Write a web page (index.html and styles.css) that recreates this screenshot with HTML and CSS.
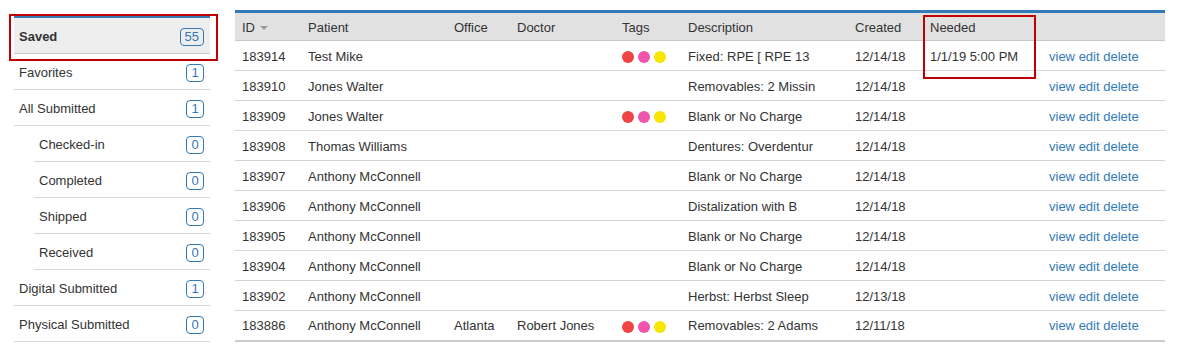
FILE: index.html
```html
<!DOCTYPE html>
<html>
<head>
  <meta charset="UTF-8">
  <title>Cases</title>
  <link rel="stylesheet" href="styles.css">
</head>
<body>
  <div class="page">
    <!-- Case folders -->
    <ul class="folders">
      <li class="folder active"><span>Saved</span><span class="badge">55</span></li>
      <li class="folder"><span>Favorites</span><span class="badge">1</span></li>
      <li class="folder"><span>All Submitted</span><span class="badge">1</span></li>
      <li class="folder sub"><span>Checked-in</span><span class="badge">0</span></li>
      <li class="folder sub"><span>Completed</span><span class="badge">0</span></li>
      <li class="folder sub"><span>Shipped</span><span class="badge">0</span></li>
      <li class="folder sub"><span>Received</span><span class="badge">0</span></li>
      <li class="folder"><span>Digital Submitted</span><span class="badge">1</span></li>
      <li class="folder"><span>Physical Submitted</span><span class="badge">0</span></li>
    </ul>

    <!-- Cases table -->
    <table class="cases">
      <colgroup>
        <col style="width:66px"><col style="width:146px"><col style="width:63px"><col style="width:105px">
        <col style="width:66px"><col style="width:167px"><col style="width:75px"><col style="width:119px"><col>
      </colgroup>
      <thead>
        <tr>
          <th>ID <span class="caret"></span></th>
          <th>Patient</th>
          <th>Office</th>
          <th>Doctor</th>
          <th>Tags</th>
          <th>Description</th>
          <th>Created</th>
          <th>Needed</th>
          <th></th>
        </tr>
      </thead>
      <tbody>
        <tr>
          <td>183914</td><td>Test Mike</td><td></td><td></td>
          <td><span class="dot red"></span><span class="dot pink"></span><span class="dot yellow"></span></td>
          <td>Fixed: RPE [ RPE 13</td><td>12/14/18</td><td>1/1/19 5:00 PM</td>
          <td class="actions"><a href="#">view</a> <a href="#">edit</a> <a href="#">delete</a></td>
        </tr>
        <tr>
          <td>183910</td><td>Jones Walter</td><td></td><td></td><td></td>
          <td>Removables: 2 Missin</td><td>12/14/18</td><td></td>
          <td class="actions"><a href="#">view</a> <a href="#">edit</a> <a href="#">delete</a></td>
        </tr>
        <tr>
          <td>183909</td><td>Jones Walter</td><td></td><td></td>
          <td><span class="dot red"></span><span class="dot pink"></span><span class="dot yellow"></span></td>
          <td>Blank or No Charge</td><td>12/14/18</td><td></td>
          <td class="actions"><a href="#">view</a> <a href="#">edit</a> <a href="#">delete</a></td>
        </tr>
        <tr>
          <td>183908</td><td>Thomas Williams</td><td></td><td></td><td></td>
          <td>Dentures: Overdentur</td><td>12/14/18</td><td></td>
          <td class="actions"><a href="#">view</a> <a href="#">edit</a> <a href="#">delete</a></td>
        </tr>
        <tr>
          <td>183907</td><td>Anthony McConnell</td><td></td><td></td><td></td>
          <td>Blank or No Charge</td><td>12/14/18</td><td></td>
          <td class="actions"><a href="#">view</a> <a href="#">edit</a> <a href="#">delete</a></td>
        </tr>
        <tr>
          <td>183906</td><td>Anthony McConnell</td><td></td><td></td><td></td>
          <td>Distalization with B</td><td>12/14/18</td><td></td>
          <td class="actions"><a href="#">view</a> <a href="#">edit</a> <a href="#">delete</a></td>
        </tr>
        <tr>
          <td>183905</td><td>Anthony McConnell</td><td></td><td></td><td></td>
          <td>Blank or No Charge</td><td>12/14/18</td><td></td>
          <td class="actions"><a href="#">view</a> <a href="#">edit</a> <a href="#">delete</a></td>
        </tr>
        <tr>
          <td>183904</td><td>Anthony McConnell</td><td></td><td></td><td></td>
          <td>Blank or No Charge</td><td>12/14/18</td><td></td>
          <td class="actions"><a href="#">view</a> <a href="#">edit</a> <a href="#">delete</a></td>
        </tr>
        <tr>
          <td>183902</td><td>Anthony McConnell</td><td></td><td></td><td></td>
          <td>Herbst: Herbst Sleep</td><td>12/13/18</td><td></td>
          <td class="actions"><a href="#">view</a> <a href="#">edit</a> <a href="#">delete</a></td>
        </tr>
        <tr>
          <td>183886</td><td>Anthony McConnell</td><td>Atlanta</td><td>Robert Jones</td>
          <td><span class="dot red"></span><span class="dot pink"></span><span class="dot yellow"></span></td>
          <td>Removables: 2 Adams</td><td>12/11/18</td><td></td>
          <td class="actions"><a href="#">view</a> <a href="#">edit</a> <a href="#">delete</a></td>
        </tr>
      </tbody>
    </table>

    <!-- Highlight annotations -->
    <div class="mark mark-saved"></div>
    <div class="mark mark-needed"></div>
  </div>
</body>
</html>
```

FILE: styles.css
```css
* { box-sizing: border-box; }
body {
  margin: 0;
  font-family: "Liberation Sans", Arial, sans-serif;
  font-size: 13px;
  color: #333;
  background: #fff;
}
.page {
  position: relative;
  display: flex;
  align-items: flex-start;
  padding: 10px 0 0 14px;
}

/* Sidebar folders */
.folders {
  list-style: none;
  margin: 6px 25px 0 0;
  padding: 0;
  width: 196px;
  flex: none;
}
.folder {
  display: flex;
  align-items: center;
  justify-content: space-between;
  height: 36px;
  padding: 2px 6px 0 5px;
  border-bottom: 1px solid #d4d4d4;
}
.folder.sub {
  margin-left: 20px;
}
.folder.active {
  height: 38px;
  background: #eee;
  border-top: 2px solid #337ab7;
  border-bottom: 1px solid #ccc;
  font-weight: bold;
}
.badge {
  display: inline-block;
  min-width: 18px;
  height: 18px;
  padding: 0 4px;
  line-height: 16px;
  text-align: center;
  font-size: 13px;
  font-weight: normal;
  color: #337ab7;
  border: 1px solid #337ab7;
  border-radius: 4px;
}

/* Cases table */
.cases {
  width: 930px;
  border-collapse: collapse;
  table-layout: fixed;
  border-top: 3px solid #337ab7;
  border-bottom: 2px solid #ccc;
}
.cases th {
  height: 29px;
  padding: 1px 7px 0;
  text-align: left;
  font-weight: normal;
  background: #e1e1e1;
  border-bottom: 1px solid #c8c8c8;
}
.cases td {
  height: 30px;
  padding: 1px 7px 0;
  white-space: nowrap;
  overflow: hidden;
  border-bottom: 1px solid #d4d4d4;
}
.caret {
  display: inline-block;
  width: 0;
  height: 0;
  margin-left: 1px;
  vertical-align: middle;
  border-left: 4px solid transparent;
  border-right: 4px solid transparent;
  border-top: 4px solid #999;
}
.dot {
  display: inline-block;
  width: 12px;
  height: 12px;
  margin-right: 4px;
  border-radius: 50%;
  vertical-align: middle;
}
.dot.red { background: #ef4444; }
.dot.pink { background: #f055ae; }
.dot.yellow { background: #f6e600; }
.actions a {
  color: #337ab7;
  text-decoration: none;
}

/* Red annotation boxes */
.mark {
  position: absolute;
  border: 2px solid #c00000;
}
.mark-saved {
  left: 9px;
  top: 14px;
  width: 209px;
  height: 47px;
}
.mark-needed {
  left: 923px;
  top: 15px;
  width: 113px;
  height: 64px;
}
```
